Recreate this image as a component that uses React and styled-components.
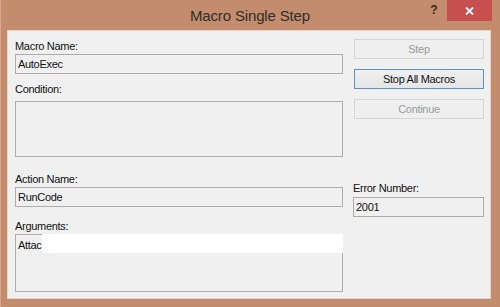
import React from "react"
import styled, { createGlobalStyle } from "styled-components"

const GlobalStyle = createGlobalStyle`
  html, body {
    margin: 0;
    padding: 0;
    background: #c38c6c;
  }
  body {
    font-family: "Liberation Sans", Arial, sans-serif;
  }
`

const Window = styled.div`
  width: 500px;
  height: 307px;
  background: #c38c6c;
  box-shadow: inset 1px 0 0 #d8a88a;
  display: flex;
  flex-direction: column;
  box-sizing: border-box;
`

const TitleBar = styled.div`
  height: 31px;
  flex: 0 0 31px;
  display: grid;
  grid-template-columns: 1fr auto 1fr;
  align-items: start;
`

const Title = styled.div`
  grid-column: 2;
  padding-top: 7px;
  font-size: 15px;
  line-height: 18px;
  color: #2e2e2e;
  letter-spacing: -0.15px;
`

const Controls = styled.div`
  grid-column: 3;
  justify-self: end;
  display: flex;
  margin-right: 8px;
`

const HelpButton = styled.div`
  width: 26px;
  height: 20px;
  display: flex;
  align-items: center;
  justify-content: center;
  font-size: 12px;
  font-weight: bold;
  color: #3a2a20;
`

const CloseButton = styled.div`
  width: 45px;
  height: 21px;
  background: #c7504f;
  display: flex;
  align-items: center;
  justify-content: center;
`

const Client = styled.div`
  margin: 0 10px 0 8px;
  height: 267px;
  background: #f0f0f0;
  box-shadow: 0 0 0 1px #e8d3c6;
  display: flex;
  gap: 10px;
  padding: 8px 0 0 7px;
  box-sizing: border-box;
  font-size: 11px;
  color: #111;
  letter-spacing: -0.3px;
`

const Column = styled.div`
  width: ${(p) => p.$width}px;
  display: flex;
  flex-direction: column;
`

const Label = styled.div`
  height: 14px;
  line-height: 14px;
  margin-top: ${(p) => p.$mt || 0}px;
  white-space: nowrap;
`

const TextBox = styled.div`
  position: relative;
  height: ${(p) => p.$h || 20}px;
  margin-top: ${(p) => p.$mt || 0}px;
  border: 1px solid #acacac;
  background: #f0f0f0;
  box-sizing: border-box;
  padding: ${(p) => (p.$multi ? "3px 2px" : "0 2px")};
  line-height: ${(p) => (p.$multi ? "14px" : "18px")};
  white-space: nowrap;
`

// white block that hides the rest of the argument text
const Redaction = styled.div`
  position: absolute;
  left: 26px;
  right: -1px;
  top: -1px;
  height: 19px;
  background: #ffffff;
`

const Button = styled.div`
  height: 20px;
  width: 130px;
  margin-left: 1px;
  margin-top: ${(p) => p.$mt || 0}px;
  box-sizing: border-box;
  display: flex;
  align-items: center;
  justify-content: center;
  border: 1px solid ${(p) => (p.$focused ? "#5b90c8" : p.$disabled ? "#d6d6d6" : "#acacac")};
  background: ${(p) =>
    p.$disabled ? "#efefef" : "linear-gradient(#f0f0f0, #e5e5e5)"};
  color: ${(p) => (p.$disabled ? "#9a9a9a" : "#111")};
`

export default function App() {
  return (
    <>
      <GlobalStyle />
      <Window>
        <TitleBar>
          <Title>Macro Single Step</Title>
          <Controls>
            <HelpButton>?</HelpButton>
            <CloseButton>
              <svg width="9" height="8" viewBox="0 0 9 8">
                <path d="M1 0.5 L8 7.5 M8 0.5 L1 7.5" stroke="#fff" strokeWidth="1.8" />
              </svg>
            </CloseButton>
          </Controls>
        </TitleBar>
        <Client>
          <Column $width={328}>
            <Label>Macro Name:</Label>
            <TextBox $mt={1}>AutoExec</TextBox>
            <Label $mt={8}>Condition:</Label>
            <TextBox $mt={5} $h={56} $multi />
            <Label $mt={15}>Action Name:</Label>
            <TextBox $mt={1}>RunCode</TextBox>
            <Label $mt={12}>Arguments:</Label>
            <TextBox $mt={1} $h={58} $multi>
              Attac
              <Redaction />
            </TextBox>
          </Column>
          <Column $width={131}>
            <Button $disabled>Step</Button>
            <Button $mt={10} $focused>Stop All Macros</Button>
            <Button $mt={10} $disabled>Continue</Button>
            <Label $mt={62}>Error Number:</Label>
            <TextBox $mt={2}>2001</TextBox>
          </Column>
        </Client>
      </Window>
    </>
  )
}
